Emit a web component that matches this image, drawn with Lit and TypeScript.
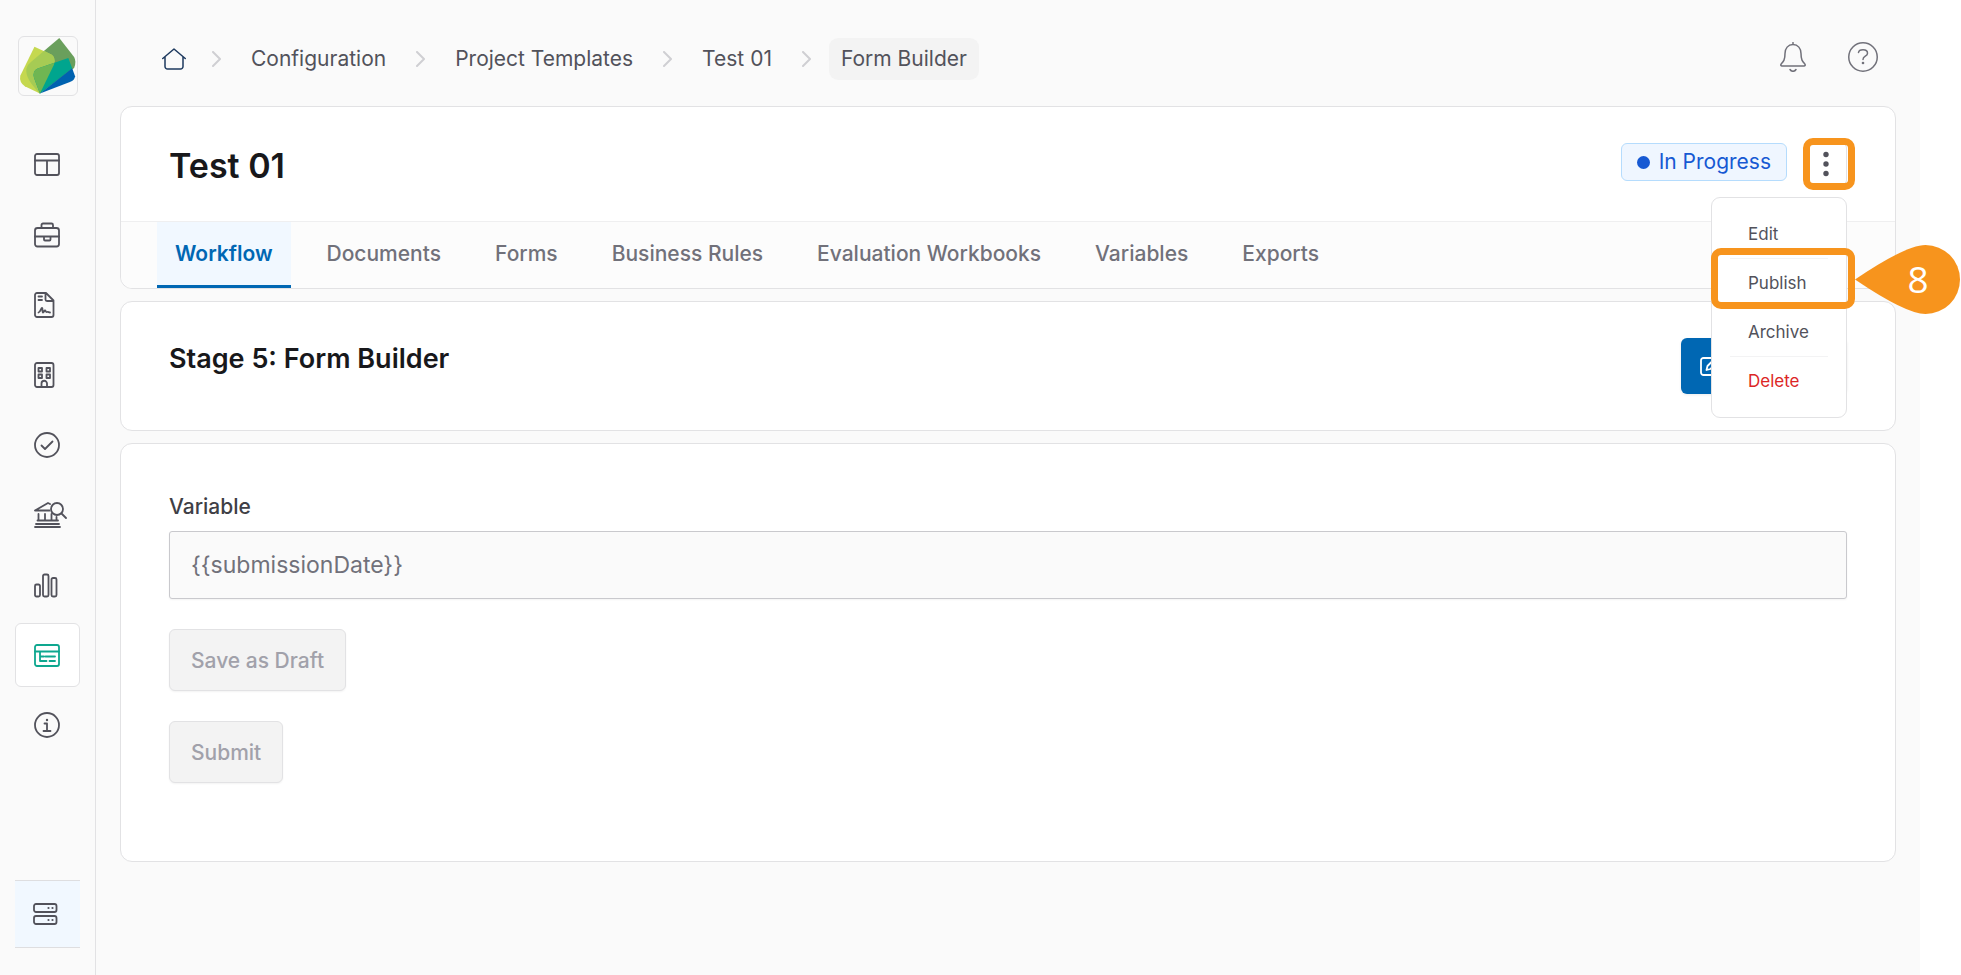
import { LitElement, html, svg, css, nothing } from "lit";
import { customElement } from "lit/decorators.js";
import { classMap } from "lit/directives/class-map.js";

const icons = {
  dashboard: svg`<svg viewBox="0 0 26 26"><rect x="1" y="2" width="24" height="21" rx="2"/><path d="M1 8.500H25M13 8.500V23"/></svg>`,
  briefcase: svg`<svg viewBox="0 0 26 26"><rect x="1" y="6" width="24" height="18.500" rx="2.500"/><path d="M7.500 6V3a1.500 1.500 0 0 1 1.500-1.500h8.500A1.500 1.500 0 0 1 19 3v3M1 14.500H25M10 14.500v3a1 1 0 0 0 1 1h4.500a1 1 0 0 0 1-1v-3"/></svg>`,
  contract: svg`<svg viewBox="0 0 26 26"><path d="M3 1h9l7.500 7.500V23a2 2 0 0 1-2 2H3a2 2 0 0 1-2-2V3a2 2 0 0 1 2-2ZM11.500 1v6.500a1.500 1.500 0 0 0 1.500 1.500h6.500M4.500 4.500h3.500M4.500 8h3.500M4.500 20.500c2-.5 2.500-4.500 3.500-4.500s0 4.500 1 4.500 1-2 2-2 .5 2 2 1.500 1.500.5 3 .5"/></svg>`,
  building: svg`<svg viewBox="0 0 26 26"><rect x="1" y="1" width="18.500" height="24" rx="2"/><path d="M4.500 6h3.500v3.500H4.500ZM12.500 6h3.500v3.500h-3.500ZM4.500 12.500h3.500V16H4.500ZM12.500 12.500h3.500V16h-3.500ZM7.500 25v-3.500a2.750 2.750 0 0 1 5.500 0V25"/></svg>`,
  check: svg`<svg viewBox="0 0 26 26"><circle cx="13" cy="13" r="12"/><path d="m7.500 13.500 3.500 3.500 7.500-7.500"/></svg>`,
  audit: svg`<svg viewBox="0 0 33 26"><circle cx="23" cy="7" r="6"/><path d="m27.500 11.500 4.500 4.500M1 8.500h14.500M1 8.500 14 1l2 1M4.500 12v6.500M11 12v6.500M17.500 12v6.500M22.500 15v3.500M3.500 18.500H24M2 22H25M1 25H26"/></svg>`,
  chart: svg`<svg viewBox="0 0 26 26"><rect x="1" y="12.500" width="5" height="12" rx="1.500"/><rect x="9" y="2.500" width="5.500" height="22" rx="1.500"/><rect x="17.500" y="6" width="5" height="18.500" rx="1.500"/></svg>`,
  template: svg`<svg viewBox="0 0 26 26"><rect x="1" y="3" width="24" height="21" rx="2"/><path d="M1 9.500H25M6 9.500v9.500h6.500M6 14.500h4M11.500 14.500H21M15.500 19H21"/></svg>`,
  info: svg`<svg viewBox="0 0 26 26"><circle cx="13" cy="13" r="12"/><path d="M10.500 11.500H13v7.500M9.500 19h7"/><circle class="solid" cx="13" cy="8" r="1.200"/></svg>`,
  server: svg`<svg viewBox="0 0 26 26"><rect x="1" y="3" width="22.500" height="8" rx="2"/><rect x="1" y="15" width="22.500" height="8" rx="2"/><g class="solid"><circle cx="15.500" cy="7" r="1.100"/><circle cx="19.500" cy="7" r="1.100"/><circle cx="15.500" cy="19" r="1.100"/><circle cx="19.500" cy="19" r="1.100"/></g></svg>`,
  home: svg`<svg viewBox="0 0 24 22"><path d="M0.750 10.500 12 1l11.250 9.500M3 9v9.500a2.500 2.500 0 0 0 2.500 2.500h13a2.500 2.500 0 0 0 2.500-2.500V9"/></svg>`,
  chevron: svg`<svg viewBox="0 0 9 16"><path d="m1 1 7 7-7 7"/></svg>`,
  bell: svg`<svg viewBox="0 0 26 30"><path d="M13 0.500V2.500M13 2.500c-5 0-8 4-8 9 0 6.500-1.500 8-3.800 10.500-.9 1.200-.2 2 .8 2h22c1 0 1.700-.8.8-2C22.500 19.500 21 18 21 11.500c0-5-3-9-8-9ZM10 27.500c.8 1.200 1.800 1.800 3 1.800s2.200-.6 3-1.800"/></svg>`,
  help: svg`<svg viewBox="0 0 30 30"><circle cx="15" cy="15" r="14.250"/><path d="M10.500 10.500c.3-2 2-2.700 4.500-2.700 2.700 0 4.500 1.200 4.500 3.400 0 3.300-4.500 2.800-4.500 6.300"/><circle class="solid" cx="15" cy="21" r="1.300"/></svg>`,
  edit: svg`<svg viewBox="0 0 22 22"><path d="M11 3H3.500A2.500 2.500 0 0 0 1 5.500v12A2.500 2.500 0 0 0 3.500 20h12a2.500 2.500 0 0 0 2.500-2.500V10M6.500 15l1-4 9-9a2 2 0 0 1 3 3l-9 9Z"/></svg>`,
};

const navItems: { label: string; icon: keyof typeof icons; active?: boolean; wide?: boolean }[] = [
  { label: "Dashboard", icon: "dashboard" },
  { label: "Projects", icon: "briefcase" },
  { label: "Contracts", icon: "contract" },
  { label: "Organizations", icon: "building" },
  { label: "Approvals", icon: "check" },
  { label: "Audit", icon: "audit", wide: true },
  { label: "Reports", icon: "chart" },
  { label: "Configuration", icon: "template", active: true },
  { label: "About", icon: "info" },
];

const crumbs = ["Configuration", "Project Templates", "Test 01", "Form Builder"];
const tabs = ["Workflow", "Documents", "Forms", "Business Rules", "Evaluation Workbooks", "Variables", "Exports"];

const base = css`
  *, *::before, *::after { box-sizing: border-box; }
  svg { display: block; fill: none; stroke: currentColor; stroke-width: 1.5; stroke-linecap: round; stroke-linejoin: round; }
  .solid { fill: currentColor; stroke: none; }
  button, input { font: inherit; margin: 0; }
  a { color: inherit; text-decoration: none; }
  ul, ol { list-style: none; margin: 0; padding: 0; }
`;

@customElement("side-nav")
class SideNav extends LitElement {
  static styles = [base, css`
    :host { display: flex; flex-direction: column; flex: none; width: 96px; padding: 36px 15px 27px; border-right: 1px solid #e2e2e4; color: #52525b; }
    .logo { width: 60px; height: 60px; margin: 0 0 37px 3px; border: 1px solid #e2e2e4; border-radius: 6px; }
    .logo svg { width: 100%; height: 100%; stroke: none; }
    .list { display: grid; gap: 6px; }
    .item { display: flex; align-items: center; height: 64px; padding-left: 18px; border: 1px solid transparent; border-radius: 6px; }
    .item svg { height: 26px; width: 26px; stroke-width: 1.8; }
    .item.wide svg { width: 33px; flex: none; }
    .item.active { background: #fff; border-color: #e2e2e4; color: #0ea78f; }
    .foot { margin-top: auto; display: flex; align-items: center; height: 68px; padding-left: 18px; background: #f1f8ff; border: solid #dedee0; border-width: 1px 0; }
    .foot svg { width: 26px; height: 26px; stroke-width: 1.8; }
  `];
  render() {
    return html`
      <a class="logo" href="#" aria-label="Start page">
        <svg viewBox="0 0 180 180">
          <path fill="#6a9f5c" d="M125 3 171 62Q179 76 171 96L65 175 28 130Q16 100 38 77Z"/>
          <path fill="#c5d84f" d="M48 30 100 54Q114 62 109 84L65 175 18 153Q0 140 4 120Z"/>
          <path fill="#a6cb54" d="M78 43 100 54Q114 62 109 84L65 175Q18 130 23 98 26 86 38 77Z"/>
          <path fill="#00a58e" d="M153 65 165 97 65 175 47 128Q40 106 58 98Z"/>
          <path fill="#6fb652" d="M110 80 108 87 65 175 47 128Q40 106 58 98Z"/>
          <path fill="#0062b0" d="M165 97 174 122Q173 134 158 140L65 175Z"/>
        </svg>
      </a>
      <nav aria-label="Main">
        <ul class="list">
          ${navItems.map((n) => html`<li><a href="#" aria-label=${n.label} aria-current=${n.active ? "page" : nothing}
            class=${classMap({ item: true, active: !!n.active, wide: !!n.wide })}>${icons[n.icon]}</a></li>`)}
        </ul>
      </nav>
      <a class="foot" href="#" aria-label="Environment">${icons.server}</a>
    `;
  }
}

@customElement("top-bar")
class TopBar extends LitElement {
  static styles = [base, css`
    :host { display: flex; justify-content: space-between; align-items: flex-start; padding: 38px 18px 26px 34px; font-size: 21px; line-height: 42px; color: #52525b; }
    .crumbs { display: flex; align-items: center; gap: 18px; white-space: nowrap; }
    .crumbs li { display: flex; align-items: center; gap: 18px; }
    .chevron svg { width: 9px; height: 16px; color: #cfcfd3; stroke-width: 2; }
    .crumb { padding: 0 12px; height: 42px; border-radius: 9px; }
    .crumb.current { background: #f3f3f3; }
    .home { padding: 0 8px; color: #1e3a5f; }
    .home svg { width: 24px; height: 22px; }
    .tools { display: flex; gap: 42px; padding-top: 4px; }
    .tool { padding: 0; border: 0; background: none; color: #71717a; }
    .tool svg { width: 30px; height: 30px; }
    .tool.bell svg { width: 26px; }
  `];
  render() {
    return html`
      <nav aria-label="Breadcrumb">
        <ol class="crumbs">
          <li><a class="home" href="#" aria-label="Home">${icons.home}</a></li>
          ${crumbs.map((c, i) => {
            const current = i === crumbs.length - 1;
            return html`<li><span class="chevron">${icons.chevron}</span><a href="#" aria-current=${current ? "page" : nothing}
              class=${classMap({ crumb: true, current })}>${c}</a></li>`;
          })}
        </ol>
      </nav>
      <div class="tools">
        <button class="tool bell" aria-label="Notifications">${icons.bell}</button>
        <button class="tool" aria-label="Help">${icons.help}</button>
      </div>
    `;
  }
}

@customElement("action-menu")
class ActionMenu extends LitElement {
  static styles = [base, css`
    :host { display: block; position: relative; width: 42px; height: 42px; }
    .toggle { display: grid; place-items: center; width: 42px; height: 42px; padding: 0; background: #fff; border: 1px solid #e2e2e4; border-radius: 5px; color: #52525b; }
    .toggle svg { width: 6px; height: 26px; }
    .ring { position: absolute; border: 7px solid #f7941d; border-radius: 10px; pointer-events: none; }
    .toggle-ring { inset: -5px -8px -5px -2px; }
    .menu { position: absolute; z-index: 1; top: 54px; right: 0; width: 136px; padding: 12px 18px 11px; background: #fff; border: 1px solid #e2e2e4; border-radius: 9px; }
    .row { position: relative; height: 49px; border-bottom: 1px solid #f3f3f4; }
    .row:last-child { border-bottom-color: transparent; }
    .entry { display: block; width: 100%; height: 48px; padding: 0 18px; border: 0; background: none; text-align: left; font-size: 17px; color: #52525b; }
    .entry.danger { color: #dc2626; }
    .row-ring { inset: -11px -27px -2px -19px; }
    .pin { position: absolute; top: -14px; left: 125px; width: 105px; height: 69px; }
    .pin path { fill: #f7941d; stroke: none; }
    .pin text { fill: #fff; stroke: none; font: 500 37px "Open Sans", sans-serif; text-anchor: middle; }
  `];
  render() {
    return html`
      <button class="toggle" aria-label="More actions" aria-expanded="true">
        <svg viewBox="0 0 6 26"><g class="solid"><circle cx="3" cy="3.500" r="2.700"/><circle cx="3" cy="13" r="2.700"/><circle cx="3" cy="22.500" r="2.700"/></g></svg>
      </button>
      <span class="ring toggle-ring"></span>
      <ul class="menu">
        <li class="row"><button class="entry">Edit</button></li>
        <li class="row">
          <button class="entry">Publish</button>
          <span class="ring row-ring"></span>
          <svg class="pin" viewBox="0 0 105 69"><path d="M0 34.500Q51 0 70.500 0A34.500 34.500 0 0 1 70.500 69Q51 69 0 34.500Z"/><text x="63" y="48">8</text></svg>
        </li>
        <li class="row"><button class="entry">Archive</button></li>
        <li class="row"><button class="entry danger">Delete</button></li>
      </ul>
    `;
  }
}

@customElement("app-root")
class AppRoot extends LitElement {
  static styles = [base, css`
    :host { display: block; font-family: Inter, "Liberation Sans", sans-serif; font-size: 21px; color: #18181b; background: #fff; }
    .shell { display: flex; min-height: 100vh; margin-right: 41px; background: #fafafa; }
    .main { flex: 1; min-width: 0; padding: 0 24px; }
    .cards { display: grid; gap: 12px; }
    .card { background: #fff; border: 1px solid #e2e2e4; border-radius: 12px; }
    .row { display: flex; justify-content: space-between; align-items: flex-start; padding: 36px 48px; }
    .title { margin: 0; font-size: 34px; line-height: 46px; height: 42px; font-weight: 600; }
    .status { display: flex; gap: 18px; align-items: flex-start; }
    .badge { display: flex; align-items: center; gap: 9px; height: 38px; padding: 0 15px; line-height: 34px; border: 1px solid #b5dcfd; border-radius: 6px; background: #eff6ff; color: #1659d3; white-space: nowrap; }
    .badge::before { content: ""; width: 13px; height: 13px; border-radius: 50%; background: currentColor; }
    .tabs { display: flex; gap: 18px; padding: 0 36px; border-top: 1px solid #efeff0; background: #fcfcfc; border-radius: 0 0 12px 12px; white-space: nowrap; }
    .tab { height: 66px; padding: 0 18px; line-height: 64px; font-weight: 500; color: #71717a; border-bottom: 3px solid transparent; }
    .tab.active { color: #0067b3; font-weight: 600; background: #f1f8ff; border-color: #0067b3; }
    .stage { margin: 0; font-size: 27px; line-height: 42px; font-weight: 600; }
    .primary { width: 166px; height: 56px; padding: 0 19px; border: 0; border-radius: 6px; background: #0067b3; color: #fff; box-shadow: 0 1px 3px rgba(0, 0, 0, 0.08); }
    .primary svg { width: 22px; height: 22px; stroke-width: 1.8; }
    .form { display: grid; justify-items: start; gap: 30px; padding: 48px 48px 78px; }
    .field { display: grid; gap: 9px; width: 100%; }
    .label { line-height: 30px; font-weight: 500; color: #3f3f46; }
    .input { width: 100%; height: 68px; padding: 0 21px; font-size: 23px; color: #71717a; background: #fafafa; border: 1px solid #c9c9cd; border-radius: 3px; box-shadow: 0 1px 2px rgba(0, 0, 0, 0.05); }
    .button { height: 62px; padding: 0 21px; font-weight: 500; color: #a1a1aa; background: #f3f3f3; border: 1px solid #e2e2e4; border-radius: 6px; box-shadow: 0 1px 2px rgba(0, 0, 0, 0.05); }
  `];
  render() {
    return html`
      <div class="shell">
        <side-nav></side-nav>
        <main class="main">
          <top-bar></top-bar>
          <div class="cards">
            <section class="card">
              <div class="row">
                <h1 class="title">Test 01</h1>
                <div class="status">
                  <span class="badge">In Progress</span>
                  <action-menu></action-menu>
                </div>
              </div>
              <nav class="tabs" aria-label="Template sections">
                ${tabs.map((t, i) => html`<a href="#" class=${classMap({ tab: true, active: i === 0 })}>${t}</a>`)}
              </nav>
            </section>
            <section class="card row">
              <h2 class="stage">Stage 5: Form Builder</h2>
              <button class="primary" aria-label="Edit form">${icons.edit}</button>
            </section>
            <form class="card form">
              <div class="field">
                <label class="label" for="variable">Variable</label>
                <input class="input" id="variable" readonly .value=${"{{submissionDate}}"} />
              </div>
              <button class="button" type="button" disabled>Save as Draft</button>
              <button class="button" type="button" disabled>Submit</button>
            </form>
          </div>
        </main>
      </div>
    `;
  }
}
